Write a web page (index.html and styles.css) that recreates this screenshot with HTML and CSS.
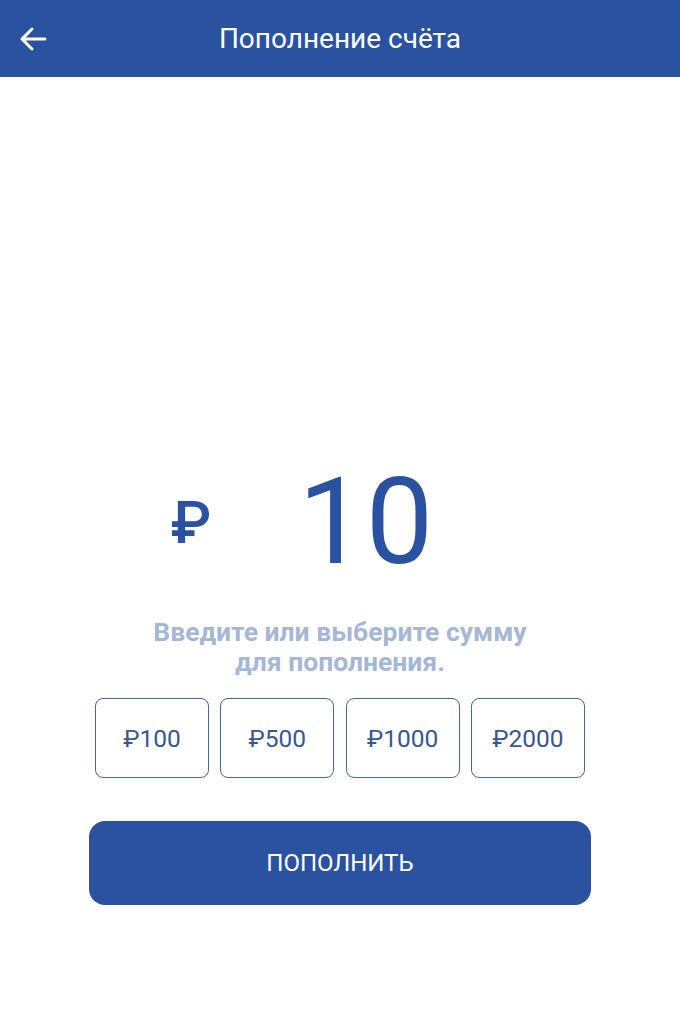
FILE: index.html
```html
<!DOCTYPE html>
<html lang="ru">
<head>
  <meta charset="UTF-8">
  <title>Пополнение счёта</title>
  <link rel="stylesheet" href="styles.css">
</head>
<body>

  <div class="topbar">
    <button class="back" aria-label="Назад">
      <svg width="28" height="26" viewBox="0 0 28 26">
        <path d="M26 13H3M13 3L3 13l10 10" fill="none" stroke="#fff" stroke-width="3" stroke-linecap="round" stroke-linejoin="round"/>
      </svg>
    </button>
    <h1 class="title">Пополнение счёта</h1>
  </div>

  <div class="content">
    <div class="amount">
      <span class="currency">₽</span>
      <span class="value" id="amountValue">10</span>
    </div>

    <p class="hint">Введите или выберите сумму<br>для пополнения.</p>

    <div class="presets">
      <button class="preset" onclick="setAmount(100)">₽100</button>
      <button class="preset" onclick="setAmount(500)">₽500</button>
      <button class="preset" onclick="setAmount(1000)">₽1000</button>
      <button class="preset" onclick="setAmount(2000)">₽2000</button>
    </div>

    <button class="submit">ПОПОЛНИТЬ</button>
  </div>

  <script>
    function setAmount(sum) {
      document.getElementById("amountValue").textContent = sum;
    }
  </script>

</body>
</html>
```

FILE: styles.css
```css
body {
  margin: 0;
  font-family: Roboto, "Noto Sans", sans-serif;
  background: #ffffff;
}

.topbar {
  height: 77px;
  background: #2a52a0;
  display: flex;
  align-items: center;
  justify-content: center;
  position: relative;
}

.back {
  position: absolute;
  left: 19px;
  top: 26px;
  padding: 0;
  border: none;
  background: none;
  cursor: pointer;
}

.back svg {
  display: block;
}

.title {
  margin: 0;
  color: #ffffff;
  font-size: 28px;
  font-weight: 400;
}

.content {
  display: flex;
  flex-direction: column;
  align-items: center;
}

.amount {
  margin-top: 385px;
  height: 120px;
  display: flex;
  align-items: center;
  gap: 87px;
  padding-right: 76px;
  color: #2a52a0;
}

.currency {
  font-size: 59px;
  font-weight: 500;
  line-height: 1;
}

.value {
  font-size: 120px;
  line-height: 1;
}

.hint {
  margin: 35px 0 0;
  text-align: center;
  font-size: 26.5px;
  font-weight: 700;
  line-height: 30px;
  color: #a5b7d4;
}

.presets {
  margin-top: 21px;
  display: flex;
  gap: 11.3px;
}

.preset {
  width: 114px;
  height: 80px;
  border: 1.5px solid #4a6796;
  border-radius: 8px;
  background: #ffffff;
  color: #385890;
  font-family: inherit;
  font-size: 24.5px;
  cursor: pointer;
}

.submit {
  margin-top: 43px;
  width: 502px;
  height: 84px;
  border: none;
  border-radius: 16px;
  background: #2a52a0;
  color: #ffffff;
  font-family: inherit;
  font-size: 24px;
  cursor: pointer;
}
```
